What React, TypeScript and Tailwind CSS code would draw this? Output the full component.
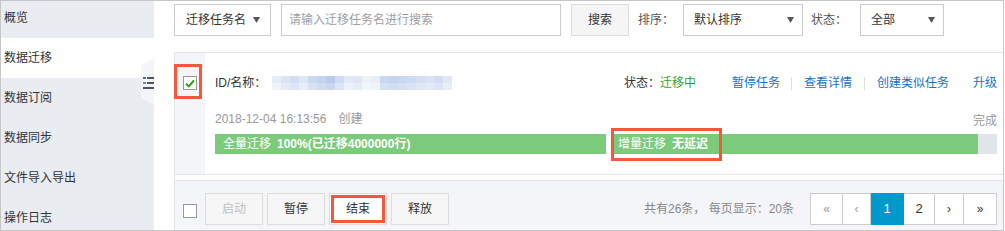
import React from "react";

const sideItems = ["概览", "数据迁移", "数据订阅", "数据同步", "文件导入导出", "操作日志"];

const mosaicTop = ["#e6edf8", "#dbe5f5", "#d2def2", "#dde6f5", "#cbd9f0", "#c3d3ee", "#b9cbeb", "#d0dcf1", "#e3eaf7", "#dfe7f6", "#edf1f9", "#e9eef8", "#c9d7ef", "#c4d4ee", "#c8d6ef", "#cfdbf1", "#d4def2", "#d9e3f4", "#d1ddf2", "#e0e8f6"];
const mosaicBot = ["#eef2fa", "#e4ebf7", "#dde6f5", "#e8eef8", "#d6e1f3", "#cfdbf1", "#c8d7ef", "#dce5f5", "#edf2fa", "#e7edf8", "#f3f6fb", "#eff3fa", "#d6e0f3", "#d2ddf2", "#d5e0f3", "#dbe4f4", "#dfe7f5", "#e3eaf7", "#dce5f5", "#e8eef8"];

function Arrow() {
  return (
    <svg width="7" height="6" viewBox="0 0 7 6" className="shrink-0">
      <path d="M0 0 L7 0 L3.5 6 Z" fill="#555" />
    </svg>
  );
}

function Check() {
  return (
    <svg width="10" height="9" viewBox="0 0 10 9">
      <path d="M1 4.6 L3.8 7.4 L9 1.4" fill="none" stroke="#2f9a12" strokeWidth="2" />
    </svg>
  );
}

export default function App() {
  return (
    <div className="w-[1004px] h-[231px] border border-[#c6c6c6] flex bg-white overflow-hidden font-['Liberation_Sans','Noto_Sans_CJK_SC',sans-serif] text-[12px] text-[#333]">
      {/* Sidebar */}
      <aside className="relative w-[153px] shrink-0 bg-[#e9edf2]">
        <div className="-mt-[3px]">
          {sideItems.map((t, i) => (
            <div
              key={t}
              className={
                i === 1
                  ? "h-[40px] flex items-center pl-[3px] bg-white"
                  : "h-[40px] flex items-center pl-[3px]"
              }
            >
              {t}
            </div>
          ))}
        </div>
        <svg className="absolute left-[140px] top-[57px]" width="13" height="47" viewBox="0 0 13 47">
          <polygon points="13,0 0,7 0,40 13,47" fill="#f4f5f8" />
          <rect x="2" y="19" width="3" height="2" fill="#5a6b82" />
          <rect x="6" y="19" width="7" height="2" fill="#4b5563" />
          <rect x="2" y="24" width="3" height="2" fill="#6b86a8" />
          <rect x="6" y="24" width="7" height="2" fill="#4b5563" />
          <rect x="2" y="29" width="11" height="2" fill="#4b5563" />
        </svg>
      </aside>

      {/* Main */}
      <main className="flex-1 flex flex-col pl-[20px] pt-[3px]">
        {/* Toolbar */}
        <div className="flex items-center h-[32px]">
          <div className="w-[97px] h-[32px] border border-[#cccccc] flex items-center justify-between pl-[11px] pr-[10px]">
            <span>迁移任务名</span>
            <Arrow />
          </div>
          <div className="ml-[10px] w-[280px] h-[32px] border border-[#cccccc] flex items-center pl-[7px] text-[#a0a0a0]">
            请输入迁移任务名进行搜索
          </div>
          <div className="ml-[10px] w-[58px] h-[32px] border border-[#dcdcdc] bg-[#f5f5f5] flex items-center justify-center">
            搜索
          </div>
          <span className="ml-[9px] text-[#555]">排序：</span>
          <div className="ml-[9px] w-[120px] h-[32px] border border-[#cccccc] flex items-center justify-between pl-[10px] pr-[8px]">
            <span>默认排序</span>
            <Arrow />
          </div>
          <span className="ml-[8px] text-[#555]">状态：</span>
          <div className="ml-[13px] w-[84px] h-[32px] border border-[#cccccc] flex items-center justify-between pl-[10px] pr-[8px]">
            <span>全部</span>
            <Arrow />
          </div>
        </div>

        {/* List */}
        <div className="mt-[16px] flex-1 flex flex-col border-l border-t border-[#e0e3e8]">
          {/* Card */}
          <div className="flex border-b border-[#e0e3e8]">
            <div className="relative w-[30px] shrink-0 bg-[#f4f5f9]">
              <div className="absolute left-[8px] top-[23px] w-[14px] h-[14px] border border-[#999] bg-white flex items-center justify-center">
                <Check />
              </div>
              <div className="absolute -left-[1px] top-[11px] w-[28px] h-[35px] border-[3px] border-[#f05a3a]" />
            </div>
            <div className="flex-1 pl-[10px] pr-[6px] pt-[19px] pb-[20px]">
              <div className="h-[22px] flex items-center">
                <span>ID/名称：</span>
                <div className="ml-[6px] flex flex-col">
                  <div className="flex">
                    {mosaicTop.map((c, i) => (
                      <div key={i} className="w-[9px] h-[7px]" style={{ backgroundColor: c }} />
                    ))}
                  </div>
                  <div className="flex">
                    {mosaicBot.map((c, i) => (
                      <div key={i} className="w-[9px] h-[7px]" style={{ backgroundColor: c }} />
                    ))}
                  </div>
                </div>
                <div className="flex-1" />
                <span>状态：</span>
                <span className="text-[#2fa32f]">迁移中</span>
                <span className="ml-[36px] pr-[11px] text-[#1a6fc6]">暂停任务</span>
                <span className="w-px h-[13px] bg-[#dddddd]" />
                <span className="px-[12px] text-[#1a6fc6]">查看详情</span>
                <span className="w-px h-[13px] bg-[#dddddd]" />
                <span className="pl-[12px] text-[#1a6fc6]">创建类似任务</span>
                <span className="pl-[24px] text-[#1a6fc6]">升级</span>
              </div>
              <div className="mt-[17px] h-[20px] flex items-end justify-between text-[#999]">
                <span className="pb-[3px]">
                  2018-12-04 16:13:56<span className="ml-[12px]">创建</span>
                </span>
                <span className="pb-[1px]">完成</span>
              </div>
              <div className="mt-[3px] h-[20px] flex text-white">
                <div className="w-[391px] bg-[#7cca7c] flex items-center pl-[8px]">
                  <span>全量迁移</span>
                  <span className="ml-[6px] font-bold">100%(已迁移4000000行)</span>
                </div>
                <div className="w-[7px] bg-white" />
                <div className="relative flex-1 bg-[#7cca7c] flex items-center pl-[5px]">
                  <span>增量迁移</span>
                  <span className="ml-[6px] font-bold">无延迟</span>
                  <div className="absolute -left-[2px] -top-[6px] w-[111px] h-[33px] border-[3px] border-[#f05a3a]" />
                </div>
                <div className="w-[19px] bg-[#e1e4e8]" />
              </div>
            </div>
          </div>

          {/* Footer */}
          <div className="mt-[5px] flex-1 border-t border-[#e0e3e8] bg-[#f4f5f9] flex items-start pt-[12px] pl-[8px] pr-[6px]">
            <div className="h-[32px] flex items-center">
              <div className="mt-[3px] w-[14px] h-[14px] border border-[#999] bg-white" />
            </div>
            <div className="ml-[8px] flex gap-[4px]">
              <div className="w-[58px] h-[32px] border border-[#dddddd] bg-[#f6f6f6] flex items-center justify-center text-[#c0c0c0]">
                启动
              </div>
              <div className="w-[58px] h-[32px] border border-[#dddddd] bg-[#f6f6f6] flex items-center justify-center">
                暂停
              </div>
              <div className="w-[58px] h-[32px] border border-[#dddddd] bg-white p-[1px] flex">
                <div className="flex-1 border-[3px] border-[#f05a3a] flex items-center justify-center">结束</div>
              </div>
              <div className="w-[58px] h-[32px] border border-[#dddddd] bg-[#f6f6f6] flex items-center justify-center">
                释放
              </div>
            </div>
            <div className="flex-1" />
            <div className="h-[32px] flex items-center text-[#888]">共有26条， 每页显示：20条</div>
            <div className="ml-[16px] flex h-[32px]">
              <div className="w-[33px] border border-[#cccccc] bg-white flex items-center justify-center text-[#999]">«</div>
              <div className="w-[28px] border border-l-0 border-[#cccccc] bg-white flex items-center justify-center text-[#999]">‹</div>
              <div className="w-[33px] border border-l-0 border-[#0099cc] bg-[#0099cc] flex items-center justify-center text-white text-[13px]">1</div>
              <div className="w-[31px] border border-l-0 border-[#cccccc] bg-white flex items-center justify-center text-[13px]">2</div>
              <div className="w-[29px] border border-l-0 border-[#cccccc] bg-white flex items-center justify-center text-[#333]">›</div>
              <div className="w-[33px] border border-l-0 border-[#cccccc] bg-white flex items-center justify-center text-[#333]">»</div>
            </div>
          </div>
        </div>
      </main>
    </div>
  );
}
